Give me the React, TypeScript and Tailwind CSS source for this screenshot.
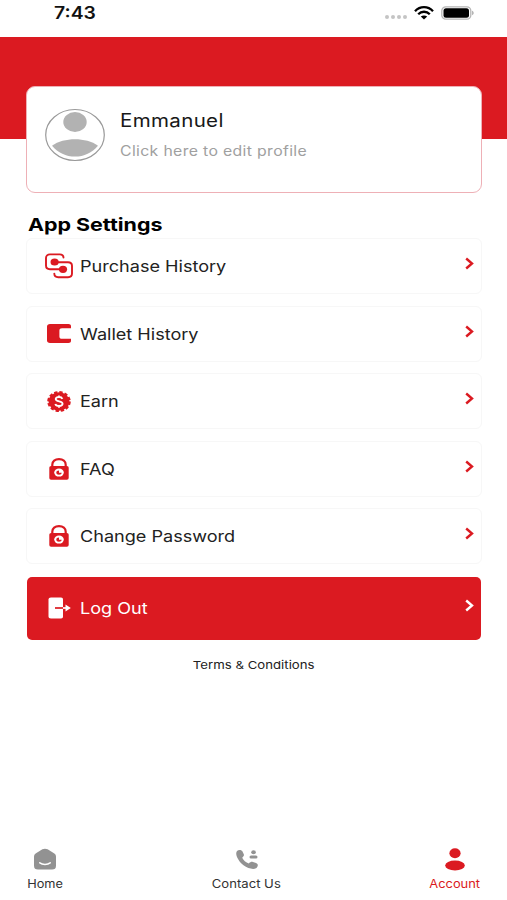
import type { ReactNode } from "react";

const PurchaseIcon = () => (
  <svg width="28" height="26" viewBox="0 0 28 26" fill="none" stroke="#db1a21" strokeWidth="1.9" strokeLinecap="round">
    <path d="M18.5 4.6C18.5 2.4 17 1.4 14.8 1.4H5C2.6 1.4 1 2.8 1 5v7.6c0 2.2 1.6 3.7 4 3.7h11" />
    <path d="M9.3 20.6c0 2.300 1.600 3.600 3.900 3.600H23c2.600 0 4-1.400 4-3.600v-7.800c0-2.200-1.400-3.600-4-3.600H12" />
    <ellipse cx="9.600" cy="9" rx="4.100" ry="3.600" fill="#db1a21" stroke="none" />
    <ellipse cx="18" cy="16.300" rx="4.100" ry="3.600" fill="#db1a21" stroke="none" />
  </svg>
);

const WalletIcon = () => (
  <svg width="24" height="19" viewBox="0 0 24 19" fill="#db1a21">
    <path d="M3 0h18.500C23 0 24 .8 24 2v2.200H15c-1.700 0-2.600.9-2.600 2.300v6c0 1.400.9 2.300 2.600 2.300h9V17c0 1.200-1 2-2.500 2H3c-1.800 0-3-1-3-2.500v-14C0 1 1.200 0 3 0z" />
  </svg>
);

const EarnIcon = () => (
  <svg width="24" height="21" viewBox="0 0 24 21">
    <ellipse cx="12" cy="10.500" rx="10.500" ry="9.200" fill="#db1a21" />
    <ellipse cx="12" cy="10.500" rx="10.800" ry="9.400" fill="none" stroke="#db1a21" strokeWidth="2" strokeDasharray="3.350 1.950" />
    <path d="M15.400 7.800c-.5-1.200-1.700-1.800-3.400-1.800-2 0-3.300.8-3.300 2.100 0 3.200 6.900 1.500 6.900 4.700 0 1.400-1.500 2.200-3.600 2.200-1.900 0-3.300-.7-3.700-2M12 4.400V6m0 9v1.700" fill="none" stroke="#fff" strokeWidth="1.800" />
  </svg>
);

const LockIcon = () => (
  <svg width="20" height="22" viewBox="0 0 20 22">
    <path d="M3.300 9V6.700C3.300 3.400 6 1.100 10 1.100s6.700 2.300 6.700 5.600V9" fill="none" stroke="#db1a21" strokeWidth="2.200" />
    <rect x=".3" y="8" width="19.400" height="13.800" rx="1.800" fill="#db1a21" />
    <ellipse cx="10" cy="14.600" rx="4.800" ry="4" fill="#fff" />
    <path d="M10 12.600c-1.700 0-2.700.9-2.700 2.100s1.100 2 2.700 2 2.700-.8 2.700-2H10z" fill="#db1a21" />
  </svg>
);

const LogoutIcon = () => (
  <svg width="23" height="22" viewBox="0 0 23 22">
    <path d="M3 .5h10c1.300 0 2 .7 2 2v17c0 1.300-.7 2-2 2H3c-1.600 0-2.500-.7-2.500-2v-17C.5 1.200 1.400.5 3 .5z" fill="#fff" />
    <path d="M7 11h8.500" stroke="#db1a21" strokeWidth="1.700" />
    <path d="M15 11h4" stroke="#fff" strokeWidth="1.700" />
    <path d="M17.500 7.500L22.800 11l-5.300 3.500z" fill="#fff" />
  </svg>
);

const Chevron = () => (
  <svg width="9" height="13" viewBox="0 0 9 13" fill="none" stroke="currentColor" strokeWidth="2.400">
    <path d="M1.200 1.500L7 6.500 1.200 11.500" />
  </svg>
);

const rows = [
  { label: "Purchase History", icon: <PurchaseIcon /> },
  { label: "Wallet History", icon: <WalletIcon /> },
  { label: "Earn", icon: <EarnIcon /> },
  { label: "FAQ", icon: <LockIcon /> },
  { label: "Change Password", icon: <LockIcon /> },
];

const Row = ({ label, icon }: { label: string; icon: ReactNode }) => (
  <li className="flex h-[56px] items-center rounded-md border-[1.5px] border-[#f7f7f7] pr-[7px] pl-[17px]">
    <span className="flex w-[30px] shrink-0 justify-center">{icon}</span>
    <span className="ml-[6px] origin-left scale-x-[1.13] text-[16px] leading-5 whitespace-nowrap text-[#222]">{label}</span>
    <span className="mb-[5px] ml-auto text-[#db1a21]"><Chevron /></span>
  </li>
);

const StatusBar = () => (
  <div className="flex h-[37px] items-start pt-[3px] pr-[33px] pl-[54px]">
    <span className="origin-left scale-x-[1.14] text-[17px] leading-5 font-semibold text-[#111]">7:43</span>
    <div className="mt-[3px] ml-auto flex items-center">
      <div className="mt-[8px] mr-[7px] flex gap-[2px]">
        <i className="h-1 w-1 rounded-full bg-[#c4c4c4]" />
        <i className="h-1 w-1 rounded-full bg-[#c4c4c4]" />
        <i className="h-1 w-1 rounded-full bg-[#c4c4c4]" />
        <i className="h-1 w-1 rounded-full bg-[#c4c4c4]" />
      </div>
      <svg width="20" height="14" viewBox="0 0 20 14" fill="none" stroke="#000" strokeWidth="2.300">
        <path d="M1 5.200C6-.2 14-.2 19 5.200M4.200 8.300c3.300-3.400 8.300-3.400 11.600 0" />
        <path d="M10 13.500l3.200-2.900c-1.800-1.600-4.600-1.600-6.400 0z" fill="#000" stroke="none" />
      </svg>
      <svg className="ml-[7px]" width="33" height="14" viewBox="0 0 33 14">
        <rect x=".8" y=".8" width="29" height="12.400" rx="4" fill="#fff" stroke="#b5b5b5" strokeWidth="1.300" />
        <rect x="2.500" y="2.300" width="25.500" height="9.400" rx="2.500" fill="#000" />
        <path d="M31 4.800c2.300.7 2.300 3.700 0 4.400z" fill="#b5b5b5" />
      </svg>
    </div>
  </div>
);

export default function App() {
  return (
    <div className="flex h-[900px] w-[507px] flex-col overflow-hidden bg-white font-['Inter',sans-serif]">
      <StatusBar />
      <div className="h-[102px] shrink-0 bg-[#db1a21]" />

      <main className="relative -mt-[53px] pr-[25px] pl-[26px]">
        <section className="flex h-[107px] rounded-[9px] border border-[#eeb0b6] bg-white pt-[21px] pl-[17px]">
          <svg width="62" height="54" viewBox="0 0 62 54">
            <ellipse cx="31" cy="27" rx="29.300" ry="25.500" fill="#fff" stroke="#999" strokeWidth="1.200" />
            <ellipse cx="31" cy="14" rx="11.700" ry="10" fill="#b2b2b2" />
            <path d="M8 37.700C20 29.200 42 29.200 54 37.700C48 44.900 40 48.500 31 48.500S14 44.900 8 37.700z" fill="#b2b2b2" />
          </svg>
          <div className="ml-[13.5px] flex flex-col items-start pt-px">
            <p className="origin-left scale-x-[1.14] text-[18px] leading-6 tracking-[0.3px] text-[#181818]">Emmanuel</p>
            <p className="mt-[8px] origin-left scale-x-[1.13] text-[14px] leading-5 tracking-[0.3px] text-[#a0a0a0]">Click here to edit profile</p>
          </div>
        </section>

        <h2 className="mt-[20px] ml-[2px] w-fit origin-left scale-x-[1.19] text-[18px] leading-6 font-bold text-black">App Settings</h2>

        <ul className="mt-[1px] space-y-[11.5px]">
          {rows.map((row) => (
            <Row key={row.label} label={row.label} icon={row.icon} />
          ))}
        </ul>

        <button className="mt-[12.5px] ml-[1px] flex h-[63px] w-[454px] items-center rounded-[5px] bg-[#db1a21] pr-[7px] pl-[17px] text-white">
          <span className="flex w-[30px] justify-center"><LogoutIcon /></span>
          <span className="ml-[6px] origin-left scale-x-[1.13] text-[16px] leading-5">Log Out</span>
          <span className="mb-[5px] ml-auto"><Chevron /></span>
        </button>

        <p className="mt-[17px] text-center text-[11px] leading-4 text-[#222]">
          <span className="inline-block scale-x-[1.2]">Terms &amp; Conditions</span>
        </p>
      </main>

      <nav className="mt-auto flex h-[52px] justify-between px-[27px] text-[11.5px] leading-4 text-[#333]">
        <a className="flex w-[36px] flex-col items-center">
          <svg width="24" height="23" viewBox="0 0 24 23">
            <path d="M9.400 1.300C11 .4 13 .4 14.600 1.300L21 5.300C22.500 6.300 23 7.300 23 9v8.500c0 3-1.300 4-4 4H5c-2.700 0-4-1-4-4V9c0-1.700.5-2.700 2-3.700z" fill="#929292" />
            <path d="M6.800 14.800c2.700 2.200 7.700 2.200 10.400 0" fill="none" stroke="#fff" strokeWidth="1.500" strokeLinecap="round" />
          </svg>
          <span className="mt-[5px] scale-x-[1.11]">Home</span>
        </a>
        <a className="flex w-[70px] flex-col items-center">
          <svg width="24" height="23" viewBox="0 0 24 23" fill="#929292">
            <path d="M2 3C3.500 1.500 6.500 1.500 7.500 3.500L8.800 6.300C9.300 7.600 8.500 8.400 7.200 9.700C8.300 12.200 11 14.400 13.800 15.400C15.500 14 16.400 13.600 18 14L21 15C23.300 15.800 23.400 18.300 21.500 20C19 21.800 13 20.800 8.500 17.300C3.500 13.300-.5 6.200 2 3z" />
            <ellipse cx="18.500" cy="4.200" rx="2.300" ry="2" />
            <rect x="14.500" y="7.400" width="8" height="3" rx="1.500" />
          </svg>
          <span className="mt-[5px] scale-x-[1.14] whitespace-nowrap">Contact Us</span>
        </a>
        <a className="flex w-[50px] flex-col items-center text-[#db1a21]">
          <svg width="20" height="23" viewBox="0 0 20 23" fill="#db1a21">
            <ellipse cx="10" cy="5.300" rx="5.600" ry="5" />
            <ellipse cx="10" cy="17.500" rx="9.800" ry="5" />
          </svg>
          <span className="mt-[5px] scale-x-[1.12]">Account</span>
        </a>
      </nav>
    </div>
  );
}
